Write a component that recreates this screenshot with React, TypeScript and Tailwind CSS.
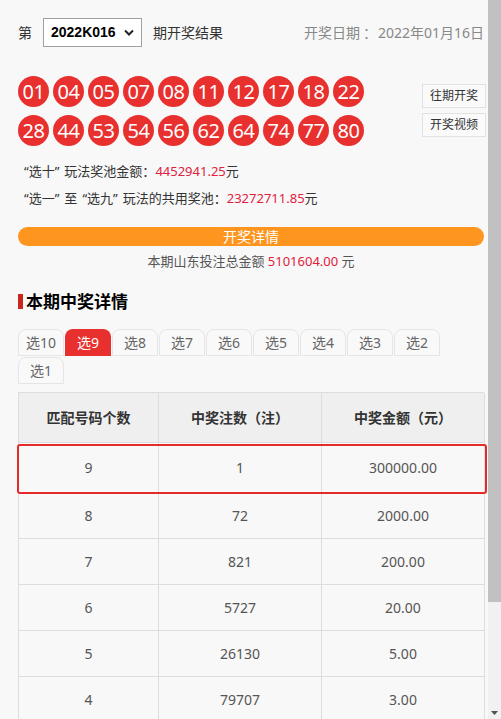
import React from "react";

const balls1 = ["01", "04", "05", "07", "08", "11", "12", "17", "18", "22"];
const balls2 = ["28", "44", "53", "54", "56", "62", "64", "74", "77", "80"];
const tabs = ["选10", "选9", "选8", "选7", "选6", "选5", "选4", "选3", "选2", "选1"];
const rows = [
  ["8", "72", "2000.00"],
  ["7", "821", "200.00"],
  ["6", "5727", "20.00"],
  ["5", "26130", "5.00"],
  ["4", "79707", "3.00"],
];

const F = "font-['Noto_Sans','Noto_Sans_CJK_SC',sans-serif]";

function Ball({ n }: { n: string }) {
  return (
    <div className="w-[31px] h-[31px] rounded-full bg-[#e8302f] text-white text-[20px] leading-none flex items-center justify-center tracking-[-0.5px]">
      {n}
    </div>
  );
}

function Q({ t }: { t: string }) {
  return (
    <>
      <span>“</span>
      {t}
      <span className="mr-[5px]">”</span>
    </>
  );
}

export default function App() {
  return (
    <div className={`flex h-[719px] w-[501px] overflow-hidden bg-[#f8f8f8] ${F}`}>
      <div className="w-[488px] pl-[18px] pr-[4px] pt-[18px]">
        {/* top row */}
        <div className="flex items-center h-[28px]">
          <span className="text-[14px] text-[#333]">第</span>
          <div className="ml-[11px] w-[99px] h-[29px] border border-[#a0a0a0] bg-white flex items-center justify-between pl-[7px] pr-[7px]">
            <span className="font-['Liberation_Sans',sans-serif] font-bold text-[14px] text-black">2022K016</span>
            <svg width="10" height="7" viewBox="0 0 10 7">
              <path d="M1 1.5 L5 5.5 L9 1.5" fill="none" stroke="#222" strokeWidth="2" />
            </svg>
          </div>
          <span className="ml-[11px] text-[14px] text-[#333]">期开奖结果</span>
          <span className="ml-auto text-[14px] text-[#888]">
            开奖日期<span className="font-['Noto_Sans_CJK_SC',sans-serif] pl-[3px] pr-[1px]">：</span>2022年01月16日
          </span>
        </div>

        {/* balls */}
        <div className="flex mt-[30px]">
          <div className="flex flex-col gap-[8px]">
            <div className="flex gap-[4px]">
              {balls1.map((b) => (
                <Ball key={b} n={b} />
              ))}
            </div>
            <div className="flex gap-[4px]">
              {balls2.map((b) => (
                <Ball key={b} n={b} />
              ))}
            </div>
          </div>
          <div className="ml-auto mr-[-2px] mt-[8px] flex flex-col gap-[5px]">
            <div className="w-[64px] h-[24px] border border-[#e2e2e2] bg-[#fafafa] text-[12px] text-[#333] flex items-center justify-center">往期开奖</div>
            <div className="w-[64px] h-[24px] border border-[#e2e2e2] bg-[#fafafa] text-[12px] text-[#333] flex items-center justify-center">开奖视频</div>
          </div>
        </div>

        {/* pool lines */}
        <div className="mt-[12px] pl-[6px] text-[13px] text-[#333]">
          <div className="h-[27px] flex items-center">
            <Q t="选十" />
            玩法奖池金额：<span className="text-[#e0203c]">4452941.25</span>元
          </div>
          <div className="h-[28px] flex items-center">
            <Q t="选一" />
            <span className="mr-[5px]">至</span>
            <Q t="选九" />
            玩法的共用奖池：<span className="text-[#e0203c]">23272711.85</span>元
          </div>
        </div>

        {/* orange bar */}
        <div className="mt-[14px] w-[466px] h-[19px] rounded-full bg-[#fd951f] text-white text-[14px] flex items-center justify-center">
          开奖详情
        </div>
        <div className="mt-[6px] w-[466px] text-center text-[13px] text-[#555]">
          本期山东投注总金额 <span className="text-[#e0203c]">5101604.00</span> 元
        </div>

        {/* heading */}
        <div className="mt-[20px] flex items-center h-[20px]">
          <div className="w-[5px] h-[15px] bg-[#c8281e]" />
          <span className="ml-[3px] text-[17px] font-bold text-black">本期中奖详情</span>
        </div>

        {/* tabs */}
        <div className="mt-[17px] w-[466px] flex flex-wrap gap-x-[1px] gap-y-[1px]">
          {tabs.map((t) => (
            <div
              key={t}
              className={
                t === "选9"
                  ? "w-[46px] h-[27px] rounded-t-[8px] bg-[#e8302f] text-white text-[14px] flex items-center justify-center"
                  : "w-[46px] h-[27px] rounded-t-[8px] border border-[#e5e5e5] bg-[#f9f9f9] text-[#666] text-[14px] flex items-center justify-center"
              }
            >
              {t}
            </div>
          ))}
        </div>

        {/* table */}
        <div className="mt-[8px] w-[466px] border-l border-t border-[#dddddd]">
          <div className="grid grid-cols-[140px_163px_163px] h-[50px] bg-[#efefef] text-[14px] font-bold text-[#333]">
            <div className="flex items-center justify-center border-r border-b border-[#dddddd]">匹配号码个数</div>
            <div className="flex items-center justify-center border-r border-b border-[#dddddd]">中奖注数（注）</div>
            <div className="flex items-center justify-center border-r border-b border-[#dddddd]">中奖金额（元）</div>
          </div>
          <div className="relative grid grid-cols-[140px_163px_163px] h-[50px] text-[14px] text-[#555]">
            <div className="flex items-center justify-center border-r border-b border-[#dddddd]">9</div>
            <div className="flex items-center justify-center border-r border-b border-[#dddddd]">1</div>
            <div className="flex items-center justify-center border-r border-b border-[#dddddd]">300000.00</div>
            <div className="absolute left-[-2px] right-[-3px] top-[1px] bottom-[-1px] border-2 border-[#e52a2a] rounded-[3px]" />
          </div>
          {rows.map((r) => (
            <div key={r[0]} className="grid grid-cols-[140px_163px_163px] h-[46px] text-[14px] text-[#555]">
              {r.map((c, i) => (
                <div key={i} className="flex items-center justify-center border-r border-b border-[#dddddd]">
                  {c}
                </div>
              ))}
            </div>
          ))}
        </div>
      </div>

      {/* scrollbar */}
      <div className="w-[13px] h-[719px] bg-[#f1f1f1] flex flex-col">
        <div className="w-[13px] h-[602px] bg-[#c1c1c1]" />
        <div className="flex-1" />
        <div className="h-[13px] flex items-center justify-center">
          <svg width="7" height="4" viewBox="0 0 7 4">
            <path d="M0 0 L7 0 L3.5 4 Z" fill="#505050" />
          </svg>
        </div>
      </div>
    </div>
  );
}
